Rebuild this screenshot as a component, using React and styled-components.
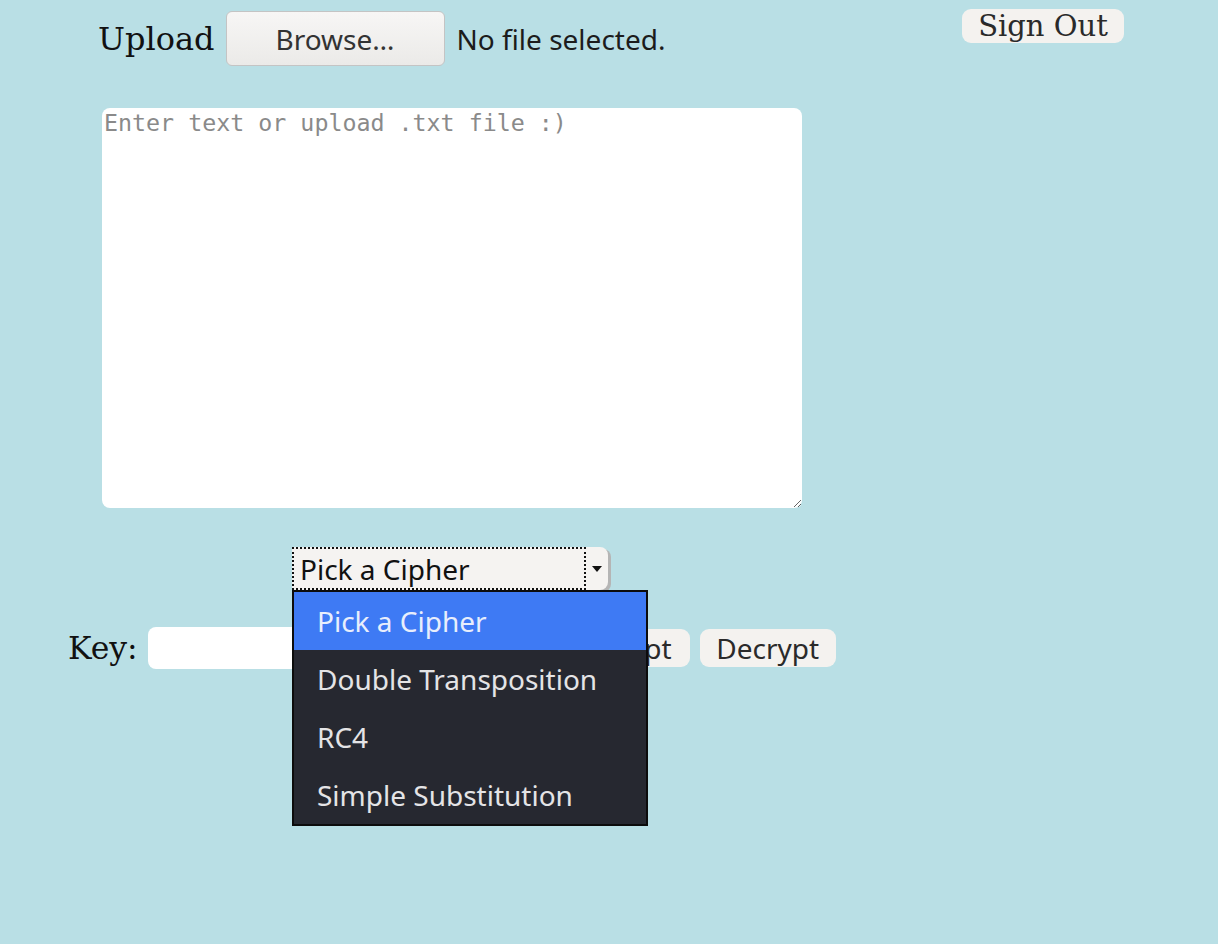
import React from "react";
import styled, { createGlobalStyle } from "styled-components";

const GlobalStyle = createGlobalStyle`
    html, body {
        margin: 0;
        padding: 0;
        background: #b9dfe5;
    }
    body {
        min-height: 944px;
        font-family: "DejaVu Serif", serif;
        color: #111;
    }
`;

const Page = styled.div`
    display: flex;
    flex-direction: column;
    min-height: 944px;
`;

const TopBar = styled.div`
    display: flex;
    align-items: flex-start;
    justify-content: space-between;
    padding: 9px 94px 0 98px;
`;

const UploadGroup = styled.div`
    display: flex;
    align-items: center;
    margin-top: 2px;
`;

const SerifLabel = styled.span`
    font-family: "DejaVu Serif", serif;
    font-size: ${({ $size }) => $size || 32}px;
    color: #111;
`;

const BrowseButton = styled.button`
    width: 219px;
    height: 55px;
    margin-left: 11px;
    border: 1px solid #c4c4c4;
    border-radius: 6px;
    background: linear-gradient(#f7f6f5, #ebeae8);
    font-family: "Noto Sans", sans-serif;
    font-size: 28px;
    color: #333;
    padding: 0;
`;

const FileStatus = styled.span`
    margin-left: 12px;
    font-family: "Noto Sans", sans-serif;
    font-size: 28px;
    color: #1c1c1c;
`;

const PillButton = styled.button`
    height: ${({ $h }) => $h || 38}px;
    width: ${({ $w }) => $w}px;
    border: none;
    border-radius: 9px;
    background: #f4f2ef;
    padding: 0;
    font-family: ${({ $serif }) =>
        $serif ? '"DejaVu Serif", serif' : '"Noto Sans", sans-serif'};
    font-size: ${({ $serif }) => ($serif ? 29 : 28)}px;
    color: #2a2a2a;
`;

const TextArea = styled.textarea`
    display: block;
    box-sizing: border-box;
    width: 700px;
    height: 400px;
    margin: 42px 0 0 102px;
    padding: 1px 2px;
    border: none;
    border-radius: 8px;
    background: #fff;
    font-family: "DejaVu Sans Mono", monospace;
    font-size: 23.3px;
    resize: both;
    outline: none;

    &::placeholder {
        color: #8a8a8a;
    }
`;

const SelectWrap = styled.div`
    position: relative;
    margin: 39px 0 0 292px;
    width: 320px;
    height: 43px;
`;

const SelectBox = styled.div`
    display: flex;
    height: 100%;
    background: #f5f3f1;
    border-radius: 0 8px 8px 0;
    box-shadow: 3px 2px 0 #b5b5b5;
    width: 316px;
`;

const SelectValue = styled.div`
    flex: 1;
    display: flex;
    align-items: center;
    padding-left: 8px;
    outline: 2px dotted #111;
    outline-offset: -2px;
    font-family: "Noto Sans", sans-serif;
    font-size: 28px;
    color: #111;
`;

const SelectArrow = styled.div`
    width: 22px;
    display: flex;
    align-items: center;
    justify-content: center;

    &::after {
        content: "";
        border-left: 5px solid transparent;
        border-right: 5px solid transparent;
        border-top: 6px solid #111;
    }
`;

const Menu = styled.ul`
    position: absolute;
    top: 100%;
    left: 0;
    width: 356px;
    box-sizing: border-box;
    margin: 0;
    padding: 0;
    list-style: none;
    background: #262830;
    border: 2px solid #0c0c0c;
    z-index: 10;
`;

const MenuItem = styled.li`
    height: 58px;
    display: flex;
    align-items: center;
    padding-left: 23px;
    font-family: "Noto Sans", sans-serif;
    font-size: 28px;
    color: ${({ $active }) => ($active ? "#e8eefc" : "#e4e4e6")};
    background: ${({ $active }) => ($active ? "#3e7af4" : "transparent")};
`;

const KeyRow = styled.div`
    display: flex;
    align-items: center;
    gap: 10px;
    margin-top: 37px;
    padding-left: 68px;
`;

const KeyInput = styled.input`
    width: 396px;
    height: 42px;
    box-sizing: border-box;
    border: none;
    border-radius: 8px;
    background: #fff;
    outline: none;
`;

const ciphers = ["Pick a Cipher", "Double Transposition", "RC4", "Simple Substitution"];

export default function App() {
    return (
        <Page>
            <GlobalStyle />
            <TopBar>
                <UploadGroup>
                    <SerifLabel>Upload</SerifLabel>
                    <BrowseButton>Browse…</BrowseButton>
                    <FileStatus>No file selected.</FileStatus>
                </UploadGroup>
                <PillButton $serif $w={162} $h={34}>
                    Sign Out
                </PillButton>
            </TopBar>

            <TextArea placeholder="Enter text or upload .txt file :)" />

            <SelectWrap>
                <SelectBox>
                    <SelectValue>Pick a Cipher</SelectValue>
                    <SelectArrow />
                </SelectBox>
                <Menu>
                    {ciphers.map((name, i) => (
                        <MenuItem key={name} $active={i === 0}>
                            {name}
                        </MenuItem>
                    ))}
                </Menu>
            </SelectWrap>

            <KeyRow>
                <SerifLabel $size={31.5}>Key:</SerifLabel>
                <KeyInput />
                <PillButton $w={136}>Encrypt</PillButton>
                <PillButton $w={136}>Decrypt</PillButton>
            </KeyRow>
        </Page>
    );
}
